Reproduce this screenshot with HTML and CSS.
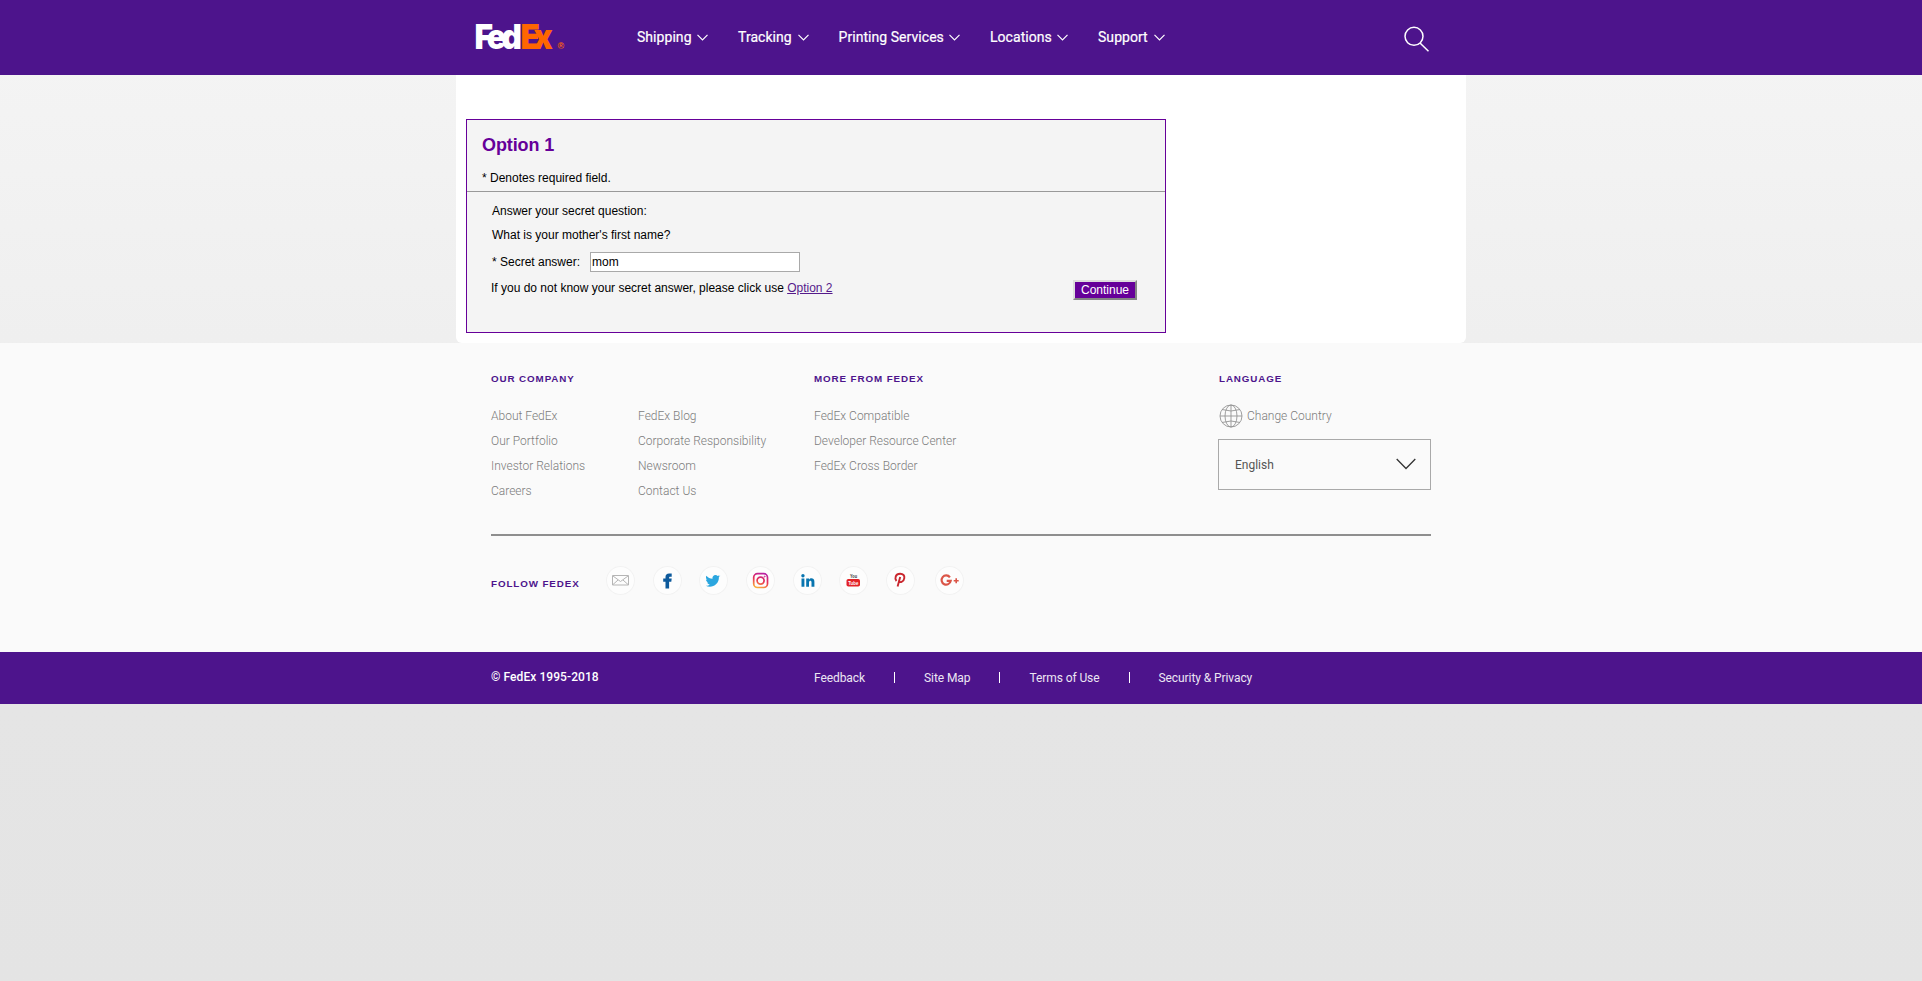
FILE: index.html
```html
<!DOCTYPE html>
<html lang="en">
<head>
<meta charset="utf-8">
<title>FedEx | Secret Question</title>
<link rel="stylesheet" href="styles.css">
</head>
<body>
<header class="header">
  <div class="header-inner">
    <svg class="logo" width="92" height="34" viewBox="0 0 92 34">
      <text transform="scale(.92 1)" y="29" x="-1.600 11.800 27.800 48.400 62.500" font-family="Inter" font-weight="900" font-size="34.4" fill="#fff">Fed<tspan fill="#f60">Ex</tspan></text>
      <text x="81.500" y="29" fill="#f60" font-family="Liberation Sans" font-weight="700" font-size="9">®</text>
    </svg>
    <nav class="nav">
      <a class="nav-item"><span class="w-shipping">Shipping</span><svg class="caret" viewBox="0 0 11 7"><path d="M.5.8l5 5 5-5"/></svg></a>
      <a class="nav-item"><span class="w-tracking">Tracking</span><svg class="caret" viewBox="0 0 11 7"><path d="M.5.8l5 5 5-5"/></svg></a>
      <a class="nav-item"><span class="w-printing">Printing Services</span><svg class="caret" viewBox="0 0 11 7"><path d="M.5.8l5 5 5-5"/></svg></a>
      <a class="nav-item"><span class="w-locations">Locations</span><svg class="caret" viewBox="0 0 11 7"><path d="M.5.8l5 5 5-5"/></svg></a>
      <a class="nav-item"><span class="w-support">Support</span><svg class="caret" viewBox="0 0 11 7"><path d="M.5.8l5 5 5-5"/></svg></a>
    </nav>
    <svg class="search" width="26" height="27" viewBox="0 0 26 27"><circle cx="10" cy="10.3" r="9" /><path d="M16 17l8.5 8.3"/></svg>
  </div>
</header>

<main class="main">
  <form class="option">
    <h1 class="option-title">Option 1</h1>
    <p class="required">* Denotes required field.</p>
    <div class="question">
      <p class="line">Answer your secret question:</p>
      <p class="line prompt">What is your mother's first name?</p>
      <div class="answer">
        <label for="answer">* Secret answer:</label>
        <input id="answer" class="answer-input" type="text" value="mom">
      </div>
    </div>
    <div class="actions">
      <p class="hint">If you do not know your secret answer, please click use <a class="option-link" href="#">Option 2</a></p>
      <button class="continue" type="button">Continue</button>
    </div>
  </form>
</main>

<footer class="footer">
  <div class="footer-inner">
    <div class="columns">
      <section>
        <h2 class="heading">OUR COMPANY</h2>
        <div class="company">
          <ul class="links"><li>About FedEx</li><li>Our Portfolio</li><li>Investor Relations</li><li>Careers</li></ul>
          <ul class="links"><li>FedEx Blog</li><li>Corporate Responsibility</li><li>Newsroom</li><li>Contact Us</li></ul>
        </div>
      </section>
      <section>
        <h2 class="heading">MORE FROM FEDEX</h2>
        <ul class="links"><li>FedEx Compatible</li><li>Developer Resource Center</li><li>FedEx Cross Border</li></ul>
      </section>
      <section class="language">
        <h2 class="heading heading-language">LANGUAGE</h2>
        <div class="country">
          <svg width="24" height="24" viewBox="0 0 24 24" fill="none" stroke="#949494" stroke-width=".9"><circle cx="12" cy="12" r="11"/><ellipse cx="12" cy="12" rx="6" ry="11"/><path d="M12 1v22M1 12h22M3 5.5q9 3 18 0M3 18.500q9-3 18 0"/></svg>
          <span>Change Country</span>
        </div>
        <div class="select"><span>English</span><svg width="20" height="12" viewBox="0 0 20 12"><path d="M.7 1l9.300 9.500L19.300 1" fill="none" stroke="#333" stroke-width="1.300"/></svg></div>
      </section>
    </div>
    <div class="follow">
      <h2 class="heading heading-follow">FOLLOW FEDEX</h2>
      <div class="social">
        <span class="disc"><svg width="29" height="29" viewBox="0 0 29 29" fill="none" stroke="#b5b5b5"><path d="M6.500 9.500h16v9.500h-16zM7 10l7.500 5.500L22 10M7 18.500l5-4.500M22 18.500l-5-4.500"/></svg></span>
        <span class="disc"><svg width="29" height="29" viewBox="0 0 29 29"><path fill="#0d5a9c" d="M12.500 22.500v-6.700h-2.300v-3.200h2.300v-1.500c0-2.300 1.200-3.600 3.600-3.600h2.600v3.200h-1.400c-.9 0-1.200.4-1.200 1.100v.8h2.600l-.4 3.200h-2.200v6.700z"/></svg></span>
        <span class="disc"><svg width="29" height="29" viewBox="0 0 29 29"><path fill="#2ba6df" d="M21.500 9.700l-1.600 1.400c.3 6-4.400 9.700-9 9.700-1.600 0-3-.4-4.100-1.100 1.600.1 3-.3 4-1.200-1.300-.1-2.300-.9-2.700-2h1.200c-1.400-.4-2.300-1.600-2.300-3l1.300.3C6.900 12.800 6.600 11 7.400 9.700c1.600 1.900 3.600 3 6.100 3.100-.4-2 1-3.800 3-3.800.8 0 1.600.4 2.200 1l1.900-.8-.8 1.400z"/></svg></span>
        <span class="disc"><svg width="29" height="29" viewBox="0 0 29 29" fill="none" stroke="url(#ig)"><defs><linearGradient id="ig" gradientUnits="userSpaceOnUse" x1="17" y1="7" x2="12" y2="22"><stop offset="0" stop-color="#b820a5"/><stop offset=".5" stop-color="#e82f55"/><stop offset="1" stop-color="#fbb03b"/></linearGradient></defs><rect x="7.700" y="7.700" width="13.800" height="13.800" rx="3.800" stroke-width="1.700"/><circle cx="14.600" cy="14.600" r="3.500" stroke-width="1.700"/><circle cx="18.700" cy="10.600" r=".5"/></svg></span>
        <span class="disc"><svg width="29" height="29" viewBox="0 0 29 29"><path fill="#0875b0" d="M8.500 12.500h2.900v8.300H8.500zM13.200 12.500H16v1.200c1.400-2.200 5.400-1.800 5.400 2v5.100h-2.900v-4.500c0-2.200-2.500-2-2.500.1v4.400h-2.800z"/><circle fill="#0875b0" cx="9.950" cy="9.800" r="1.700"/></svg></span>
        <span class="disc"><svg width="29" height="29" viewBox="0 0 29 29"><rect x="7.500" y="13" width="13.500" height="7.500" rx="1.800" fill="#e32227"/><text x="11" y="12.300" font-size="6" font-weight="700" font-family="Liberation Sans" fill="#333" textLength="7" lengthAdjust="spacingAndGlyphs">You</text><text x="9.300" y="19" font-size="5.600" font-weight="700" font-family="Liberation Sans" fill="#fff" textLength="10" lengthAdjust="spacingAndGlyphs">Tube</text></svg></span>
        <span class="disc"><svg width="29" height="29" viewBox="0 0 29 29" fill="none" stroke="#c9262e" stroke-width="1.900"><path d="M10.500 15c-2.200-2.500-1-7.300 3.600-7.300 3.200 0 4.600 2 4.200 4.400-.6 4.200-4.700 5.200-5.500 2.500M14.200 11l-2.600 9.600"/></svg></span>
        <span class="disc disc-last"><svg width="29" height="29" viewBox="0 0 29 29" fill="none" stroke="#db5648" stroke-width="2.200"><path d="M14.900 11.300A4.600 4.600 0 1 0 15.700 14.900H11.700"/><path d="M21.200 12.200v5M18.700 14.700h5" stroke-width="1.600"/></svg></span>
      </div>
    </div>
  </div>
</footer>

<div class="legal">
  <div class="legal-inner">
    <span class="copyright">© FedEx 1995-2018</span>
    <div class="legal-links">
      <span>Feedback</span><i class="bar"></i><span>Site Map</span><i class="bar"></i><span>Terms of Use</span><i class="bar"></i><span>Security &amp; Privacy</span>
    </div>
  </div>
</div>
</body>
</html>
```
FILE: styles.css
```css
* { box-sizing: border-box; }
body {
  margin: 0;
  min-height: 981px;
  background: linear-gradient(#f5f5f5 0, #efefef 340px, #e5e5e5 704px, #e4e4e4 981px);
  font-family: "Liberation Sans", Arial, sans-serif;
  font-size: 12px;
  color: #000;
}
h1, h2, p, ul { margin: 0; padding: 0; }
ul { list-style: none; }

.header { height: 75px; background: #4d148c; }
.header-inner { display: flex; width: 955px; height: 75px; margin-left: 475px; align-items: flex-start; }
.logo { margin: 20px 0 0 1px; overflow: visible; }
.nav { display: flex; gap: 30px; margin: 28px 0 0 69px; }
.nav-item { display: flex; gap: 6px; color: #fff; font: 400 14px/19px Roboto, sans-serif; letter-spacing: 0.05px; -webkit-text-stroke: 0.2px #fff; white-space: nowrap; }
.w-shipping { width: 54px; }
.w-tracking { width: 53.5px; }
.w-printing { width: 104.5px; }
.w-locations { width: 61px; }
.w-support { width: 50px; }
.caret { width: 11px; height: 7px; margin-top: 6px; fill: none; stroke: #fff; stroke-width: 1.2; }
.search { margin: 26px 0 0 auto; fill: none; stroke: #fff; stroke-width: 1.5; }

.main { width: 1010px; height: 268px; margin: 0 auto; padding: 44px 10px 0; background: #fff; border-radius: 0 0 6px 6px; }
.option { width: 700px; height: 214px; border: 1px solid #609; background: #f4f4f4; line-height: 14px; }
.option-title { padding: 15px 0 0 15px; font-size: 18px; line-height: 20px; letter-spacing: -0.1px; color: #609; }
.required { height: 37px; padding: 16px 0 0 15px; border-bottom: 1px solid #999; }
.question { padding: 12px 0 0 25px; }
.prompt { margin-top: 10px; }
.answer { display: flex; gap: 10px; margin-top: 10px; align-items: center; }
.answer label { width: 88px; white-space: nowrap; }
.answer-input { width: 210px; height: 20px; padding: 0 0 0 1px; border: 1px solid #a9a9a9; background: #fff; font: 12px "Liberation Sans", Arial, sans-serif; }
.actions { display: flex; justify-content: space-between; padding: 8px 28px 0 24px; }
.hint { padding-top: 1px; }
.option-link { color: #551a8b; }
.continue { width: 64px; height: 20px; padding: 0; border: 2px solid; border-color: #ddd #858585 #858585 #ddd; background: #609; color: #fff; font: 12px/16px "Liberation Sans", Arial, sans-serif; }

.footer { height: 309px; background: #fafafa; }
.footer-inner { width: 940px; margin: 0 auto; padding-top: 29px; }
.columns { display: grid; grid-template-columns: 323px 404px 213px; height: 164px; border-bottom: 2px solid #8e8e8e; }
.heading { font-size: 9.8px; line-height: 13px; font-weight: 700; letter-spacing: 0.9px; color: #4d148c; white-space: nowrap; }
.heading-language { padding-left: 1px; }
.company { display: grid; grid-template-columns: 147px 1fr; }
.links { padding-top: 19px; }
.links li, .country { color: #7c7c7c; font: 300 12px/25px Roboto, sans-serif; }
.country { display: flex; gap: 4px; height: 25px; margin-top: 19px; padding-left: 1px; }
.select { display: flex; justify-content: space-between; align-items: center; width: 213px; height: 51px; margin-top: 10px; padding: 0 14px 0 16px; border: 1px solid #a9a9a9; color: #555; font: 12px Roboto, sans-serif; }
.select svg { margin-top: -1px; }
.follow { display: flex; align-items: flex-start; padding-top: 30px; }
.heading-follow { width: 115px; padding-top: 11px; }
.social { display: flex; gap: 17.7px; }
.disc { display: flex; width: 29px; height: 29px; border-radius: 50%; background: #fdfdfd; box-shadow: inset 0 0 0 1px #f2f2f2; }
.disc-last { margin-left: 2px; }

.legal { height: 52px; background: #4d148c; color: #fff; }
.legal-inner { display: grid; grid-template-columns: 323px 1fr; width: 940px; margin: 0 auto; font: 12px/16px Roboto, sans-serif; }
.copyright { padding-top: 17px; font-weight: 500; letter-spacing: 0.07px; }
.legal-links { display: flex; gap: 29px; padding-top: 18px; letter-spacing: -0.08px; color: #ece6f3; }
.bar { width: 1px; height: 11px; margin-top: 2px; background: #fff; }
```
